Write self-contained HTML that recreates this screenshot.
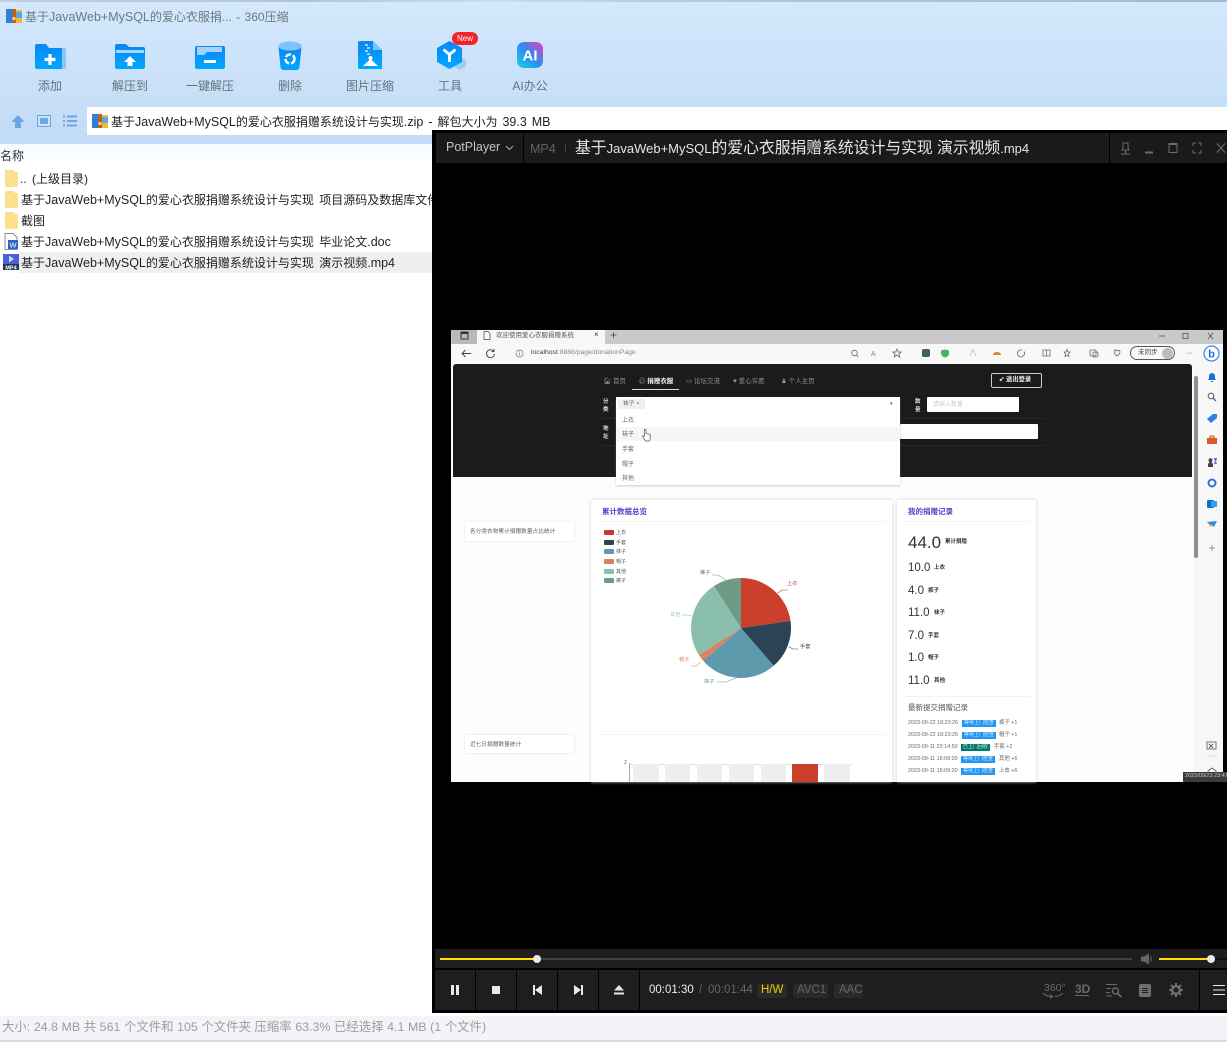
<!DOCTYPE html>
<html lang="zh"><head><meta charset="utf-8"><title>360压缩</title>
<style>
html,body{margin:0;padding:0;width:1227px;height:1042px;overflow:hidden;background:#fff}
body{position:relative;font-family:"Liberation Sans","Noto Sans CJK SC",sans-serif}
.a{position:absolute}
.t{position:absolute;white-space:nowrap;line-height:1}
svg{position:absolute;overflow:visible}
.l{font-size:12.5px}
.lb{font-size:12px;color:#67727d;top:80px;width:80px;text-align:center}
.f{font-size:12px;color:#222;left:21px;word-spacing:2px}
.v{font-size:6px;color:#666}
.nav{font-size:6.5px;color:#8f9296;top:379px}
.num{color:#333;left:908px}
.unit{font-size:5.5px;font-weight:bold;color:#333}
.dt{font-size:5.4px;color:#666;left:908px}
.bd{font-size:5px;color:#cfeaff;background:#2196f3;text-align:center;height:7px;line-height:7px}
.lg{left:604px;width:10px;height:5px;border-radius:1px}
.sep{position:absolute;top:970px;height:40px;width:1px;background:#000}
</style></head><body>

<!-- 360 zip top -->
<div class="a" style="left:0;top:0;width:1227px;height:144px;background:linear-gradient(#d3e8fc,#c6def8 75%,#c2dbf6)"></div>
<div class="a" style="left:0;top:0;width:1227px;height:2px;background:linear-gradient(90deg,#c0cfdd,#b4c4d4 25%,#c8dcf0 40%,#b8c8d8 55%,#a8b8c8)"></div>
<svg style="left:6px;top:9px" width="17" height="15"><rect y="1" width="16" height="13" fill="#f0b93a"/><rect width="8" height="14" fill="#2f7fd6"/><rect x="8" y="3" width="8" height="6" fill="#5aa7ea"/><rect x="6" width="4" height="14" fill="#b5651d"/><rect x="6.500" y="8" width="3" height="3" fill="#f4d68b"/></svg>
<div class="t" style="left:25px;top:11px;font-size:12px;color:#6d7780;word-spacing:1px">基于<span class="l">JavaWeb+MySQL</span>的爱心衣服捐... - 360压缩</div>

<svg style="left:35px;top:44px" width="31" height="26"><defs><linearGradient id="bl" x1="0" y1="0" x2="0" y2="1"><stop offset="0" stop-color="#0a86f5"/><stop offset="1" stop-color="#00a8ff"/></linearGradient></defs><path d="M26 4h3a2 2 0 0 1 2 2v17a2 2 0 0 1-2 2h-3z" fill="#8cc6f5"/><path d="M0 2a2 2 0 0 1 2-2h9l3 4h13v21H2a2 2 0 0 1-2-2z" fill="url(#bl)"/><path d="M15 10v11M9.500 15.500h11" stroke="#fff" stroke-width="3.200"/></svg>
<svg style="left:115px;top:44px" width="30" height="25"><path d="M0 2a2 2 0 0 1 2-2h9l3 3h14a2 2 0 0 1 2 2v18a2 2 0 0 1-2 2H2a2 2 0 0 1-2-2z" fill="url(#bl)"/><rect x="1" y="6" width="28" height="3" fill="#a6d6fb"/><path d="M15 12l6 6h-3.500v4h-5v-4H9z" fill="#fff"/></svg>
<svg style="left:195px;top:46px" width="30" height="23"><rect width="30" height="23" rx="2" fill="url(#bl)"/><path d="M2 2h25v5H12l-3 3H2z" fill="#b6dcfb" transform="translate(0,-1)" opacity=".9"/><rect x="9" y="14" width="12" height="3" fill="#fff"/></svg>
<svg style="left:278px;top:41px" width="24" height="29"><ellipse cx="12" cy="5" rx="11.500" ry="4.500" fill="#7cc2fb"/><path d="M.5 6c1 1.500 4 3.500 11.500 3.500S22.500 7.500 23.500 6l-2 20a3 3 0 0 1-3 3h-13a3 3 0 0 1-3-3z" fill="url(#bl)"/><circle cx="12" cy="18" r="4.500" fill="none" stroke="#fff" stroke-width="2.500" stroke-dasharray="6 2"/></svg>
<svg style="left:358px;top:41px" width="24" height="28"><path d="M2 0h13l9 9v18a1 1 0 0 1-1 1H2a2 2 0 0 1-2-2V2a2 2 0 0 1 2-2z" fill="url(#bl)"/><path d="M15 0l9 9h-9z" fill="#7cc2fb"/><rect x="7" y="3" width="3" height="2" fill="#9fd3fb"/><rect x="9" y="6" width="3" height="2" fill="#9fd3fb"/><rect x="7" y="9" width="3" height="2" fill="#9fd3fb"/><rect x="9" y="12" width="3" height="2" fill="#9fd3fb"/><path d="M5 25l7.500-7 7.500 7z" fill="#fff"/><circle cx="12.500" cy="17" r="2" fill="#fff"/></svg>
<svg style="left:437px;top:41px" width="30" height="29"><path d="M23 16l6 3.500v6l-6 3.500-6-3.500v-6z" fill="#9ccdf7"/><path d="M12.500 0l12.500 7v14l-12.500 7L0 21V7z" fill="url(#bl)"/><path d="M6.500 8.500l6 5 6-5M12.500 13.500v7.500" stroke="#fff" stroke-width="2.800" fill="none"/></svg>
<div class="a" style="left:452px;top:32px;width:26px;height:13px;border-radius:7px;background:#f5222d"></div>
<div class="t" style="left:457px;top:35px;font-size:8px;color:#fff">New</div>
<svg style="left:517px;top:42px" width="26" height="26"><defs><linearGradient id="ai" x1="0" y1="1" x2="1" y2="0"><stop offset="0" stop-color="#18d4e6"/><stop offset=".5" stop-color="#2b8cf0"/><stop offset="1" stop-color="#e83ec0"/></linearGradient></defs><rect width="26" height="26" rx="7" fill="url(#ai)"/><text x="13" y="18.500" font-size="15" font-weight="bold" fill="#fff" text-anchor="middle" font-family="Liberation Sans">AI</text></svg>

<div class="t lb" style="left:10px">添加</div>
<div class="t lb" style="left:90px">解压到</div>
<div class="t lb" style="left:170px">一键解压</div>
<div class="t lb" style="left:250px">删除</div>
<div class="t lb" style="left:330px">图片压缩</div>
<div class="t lb" style="left:410px">工具</div>
<div class="t lb" style="left:490px">AI办公</div>

<!-- address -->
<svg style="left:11px;top:115px" width="14" height="13"><path d="M7 0l6.500 7H10v6H4V7H.5z" fill="#6ca6e4"/></svg>
<svg style="left:37px;top:115px" width="14" height="12"><rect x=".5" y=".5" width="13" height="11" fill="#cfe3f8" stroke="#6ca6e4"/><rect x="3" y="3" width="8" height="6" fill="#6ca6e4"/></svg>
<svg style="left:63px;top:115px" width="14" height="12"><path d="M0 1.500h2M4 1.500h10M0 6h2M4 6h10M0 10.500h2M4 10.500h10" stroke="#6ca6e4" stroke-width="2"/></svg>
<div class="a" style="left:87px;top:107px;width:1140px;height:28px;background:#fff"></div>
<svg style="left:92px;top:114px" width="17" height="15"><rect y="1" width="16" height="13" fill="#f0b93a"/><rect width="8" height="14" fill="#2f7fd6"/><rect x="8" y="3" width="8" height="6" fill="#5aa7ea"/><rect x="6" width="4" height="14" fill="#b5651d"/><rect x="6.500" y="8" width="3" height="3" fill="#f4d68b"/></svg>
<div class="t" style="left:111px;top:116px;font-size:12px;color:#222;word-spacing:1.500px">基于<span class="l">JavaWeb+MySQL</span>的爱心衣服捐赠系统设计与实现<span class="l">.zip - </span>解包大小为<span class="l"> 39.3 MB</span></div>

<!-- list -->
<div class="a" style="left:0;top:144px;width:432px;height:22px;background:linear-gradient(#f4f9fe,#fff)"></div>
<div class="t" style="left:0;top:150px;font-size:12px;color:#333">名称</div>
<div class="a" style="left:19px;top:252px;width:413px;height:21px;background:#efefef"></div>
<svg style="left:5px;top:170px" width="14" height="18"><path d="M0 1a1 1 0 0 1 1-1h8l1 2h2a1 1 0 0 1 1 1v13a1 1 0 0 1-1 1H1a1 1 0 0 1-1-1z" fill="#fbe08f"/></svg>
<svg style="left:5px;top:191px" width="14" height="18"><path d="M0 1a1 1 0 0 1 1-1h8l1 2h2a1 1 0 0 1 1 1v13a1 1 0 0 1-1 1H1a1 1 0 0 1-1-1z" fill="#fbe08f"/></svg>
<svg style="left:5px;top:212px" width="14" height="18"><path d="M0 1a1 1 0 0 1 1-1h8l1 2h2a1 1 0 0 1 1 1v13a1 1 0 0 1-1 1H1a1 1 0 0 1-1-1z" fill="#fbe08f"/></svg>
<svg style="left:4px;top:233px" width="15" height="17"><path d="M1 .5h8l4 4v12H1z" fill="#fff" stroke="#8a8f96"/><rect x="4" y="7" width="10" height="9" fill="#2a63c8"/><text x="9" y="14.500" font-size="7.500" fill="#fff" text-anchor="middle" font-family="Liberation Sans">W</text></svg>
<svg style="left:3px;top:254px" width="16" height="16"><rect width="16" height="10" fill="#4a5fd8"/><path d="M6 1.500l5 3.500-5 3.500z" fill="#cdd6ff"/><rect y="10" width="16" height="6" fill="#27364f"/><text x="8" y="15.500" font-size="5.500" font-weight="bold" fill="#fff" text-anchor="middle" font-family="Liberation Sans">MP4</text></svg>
<div class="t f" style="left:20px;top:173px">.. (上级目录)</div>
<div class="t f" style="top:194px;width:411px;overflow:hidden">基于<span class="l">JavaWeb+MySQL</span>的爱心衣服捐赠系统设计与实现 项目源码及数据库文件</div>
<div class="t f" style="top:215px">截图</div>
<div class="t f" style="top:236px">基于<span class="l">JavaWeb+MySQL</span>的爱心衣服捐赠系统设计与实现 毕业论文<span class="l">.doc</span></div>
<div class="t f" style="top:257px">基于<span class="l">JavaWeb+MySQL</span>的爱心衣服捐赠系统设计与实现 演示视频<span class="l">.mp4</span></div>

<!-- status -->
<div class="a" style="left:0;top:1016px;width:1227px;height:24px;background:#f2f4f9"></div>
<div class="a" style="left:0;top:1040px;width:1227px;height:2px;background:#d3dfe3"></div>
<div class="t" style="left:2px;top:1021px;font-size:12.400px;color:#9c9c9c;word-spacing:.15px">大小: 24.8 MB 共 561 个文件和 105 个文件夹 压缩率 63.3% 已经选择 4.1 MB (1 个文件)</div>

<!-- PotPlayer -->
<div class="a" style="left:432px;top:130px;width:795px;height:883px;background:#000"></div>
<div class="a" style="left:436px;top:133px;width:791px;height:30px;background:#1a1a1a"></div>
<div class="a" style="left:523px;top:133px;width:1px;height:30px;background:#000"></div>
<div class="a" style="left:1109px;top:133px;width:1px;height:30px;background:#000"></div>
<div class="t" style="left:446px;top:141px;font-size:12.500px;color:#c4c4c4">PotPlayer</div>
<svg style="left:505px;top:145px" width="9" height="6"><path d="M1 1l3.500 3.500L8 1" fill="none" stroke="#aaa"/></svg>
<div class="t" style="left:530px;top:143px;font-size:12.500px;color:#626262">MP4</div>
<div class="a" style="left:565px;top:143px;width:1px;height:10px;background:#444"></div>
<div class="t" style="left:575px;top:141px;font-size:15.800px;color:#e6e6e6">基于<span style="font-size:13px">JavaWeb+MySQL</span>的爱心衣服捐赠系统设计与实现 演示视频<span style="font-size:13px">.mp4</span></div>
<svg style="left:1120px;top:142px" width="108" height="13" fill="none" stroke="#6c6c6c"><path d="M3 1h5v5l1 2H2l1-2zM5.500 8v4M1 12h9" stroke-width="1"/><path d="M25 10.500h8" stroke-width="2"/><path d="M49 1.500h8v9h-8zM49 2.500h8" stroke-width="1"/><path d="M73 1h3M73 1v3M81 1h-3M81 1v3M73 11h3M73 11V8M81 11h-3M81 11V8" stroke-width="1"/><path d="M97 1.500l8 9M105 1.500l-8 9" stroke-width="1.200"/></svg>

<!-- video frame -->
<div class="a" style="left:0;top:0;width:1227px;height:1042px;filter:blur(.35px)">
<div class="a" style="left:451px;top:330px;width:745px;height:452px;background:#fdfdfd"></div>
<div class="a" style="left:1196px;top:330px;width:27px;height:452px;background:#f7f7f7"></div>
<div class="a" style="left:451px;top:330px;width:772px;height:14px;background:#c9c9c9"></div>
<div class="a" style="left:451px;top:344px;width:772px;height:20px;background:#f8f8f8"></div>
<div class="a" style="left:452px;top:330px;width:25px;height:14px;background:#b9b9b9"></div>
<div class="a" style="left:477px;top:330px;width:128px;height:14px;background:#f7f7f7"></div>
<svg style="left:460px;top:331px" width="10" height="10"><rect x="1" y="1" width="7" height="7" fill="none" stroke="#333"/><rect x="1" y="1" width="7" height="2" fill="#333"/></svg>
<svg style="left:483px;top:331px" width="8" height="10"><path d="M1 .500h4l2 2v6H1z" fill="none" stroke="#444" stroke-width=".7"/></svg>
<div class="t v" style="left:496px;top:333px;color:#555;font-size:6.500px">欢迎使用爱心衣服捐赠系统</div>
<div class="t" style="left:594px;top:331px;font-size:8px;color:#333">×</div>
<div class="t" style="left:610px;top:329px;font-size:12px;color:#555">+</div>
<svg style="left:1158px;top:332px" width="60" height="8" fill="none" stroke="#555" stroke-width=".8"><path d="M1 4h6"/><rect x="25" y="1.500" width="5" height="5"/><path d="M50 1l5 6M55 1l-5 6"/></svg>
<svg style="left:461px;top:349px" width="36" height="10" fill="none" stroke="#444" stroke-width=".9"><path d="M1 4.500h9M4.500 1L1 4.500 4.500 8"/><path d="M32.500 2a4 4 0 1 0 1 3M33 0v2.500h-2.500"/></svg>
<svg style="left:515px;top:349px" width="9" height="9"><circle cx="4.500" cy="4.500" r="3.500" fill="none" stroke="#777" stroke-width=".7"/><path d="M4.500 3.800v2.700M4.500 2.300v.8" stroke="#777" stroke-width=".7"/></svg>
<div class="t" style="left:531px;top:350px;font-size:6.800px;color:#888"><span style="color:#444">localhost</span>:8888/page/donationPage</div>
<svg style="left:850px;top:348px" width="340" height="11" fill="none" stroke="#666" stroke-width=".8">
<circle cx="4.500" cy="5" r="2.800"/><path d="M6.500 7l2 2"/>
<text x="21" y="8" font-size="7" fill="#888" stroke="none" font-family="Liberation Sans">A</text>
<path d="M47 1l1.300 3h3l-2.500 2 1 3-2.800-1.800L44.200 9l1-3-2.500-2h3z"/>
<rect x="72" y="1" width="8" height="8" rx="2" fill="#44604e" stroke="none"/>
<path d="M95 1.500l4 1v3c0 2-2 3.500-4 4-2-.500-4-2-4-4v-3z" fill="#4bb35a" stroke="none"/>
<path d="M120 8l2.500-6h1L126 8" stroke="#bbb"/>
<path d="M143 7c0-2 2-3 4-3s4 1 4 3z" fill="#d98a2b" stroke="none"/>
<path d="M172 2a3.500 3.500 0 1 0 2 1.500"/>
<path d="M193 2h7v6h-7zM196.500 2v6"/>
<path d="M217 1.500l1 2.500h2l-1.500 2 .5 2.500-2-1.200-2 1.200.5-2.500-1.500-2h2z"/>
<rect x="240" y="2" width="6" height="6" rx="1"/><rect x="243" y="4" width="5" height="5" rx="1"/>
<path d="M264 3c1-2 3-1 3 0 1-1 3-1 3 1s-3 4-3 4-3-2-3-5z"/>
</svg>
<div class="a" style="left:1130px;top:346px;width:45px;height:14px;border:1px solid #555;border-radius:8px;box-sizing:border-box;background:#f8f8f8"></div>
<div class="t" style="left:1138px;top:350px;font-size:6.500px;color:#444">未同步</div>
<div class="a" style="left:1162px;top:348px;width:11px;height:11px;border-radius:50%;background:#bdbdbd"></div>
<div class="t" style="left:1186px;top:350px;font-size:7px;color:#333">···</div>
<svg style="left:1203px;top:345px" width="17" height="17"><circle cx="8.500" cy="8.500" r="7.500" fill="#fff" stroke="#3a87e0" stroke-width="1.200"/><text x="8.500" y="12.500" font-size="11" font-weight="bold" fill="#1f6fd0" text-anchor="middle" font-family="Liberation Sans">b</text></svg>

<div class="a" style="left:453px;top:364px;width:739px;height:113px;background:#1a1b1d;border-radius:3px 3px 0 0"></div>

<!-- nav -->
<div class="t nav" style="left:603px">🏠︎ 首页</div>
<div class="t nav" style="left:639px;color:#f0f0f0;font-weight:bold">♲ 捐赠衣服</div>
<div class="a" style="left:632px;top:389px;width:47px;height:1px;background:#ddd"></div>
<div class="t nav" style="left:686px">▭ 论坛交流</div>
<div class="t nav" style="left:733px">♥ 爱心许愿</div>
<div class="t nav" style="left:781px">♟ 个人主页</div>
<div class="a" style="left:991px;top:373px;width:51px;height:15px;border:1px solid #ccc;border-radius:2px;box-sizing:border-box"></div>
<div class="t" style="left:999px;top:377px;font-size:6.300px;color:#eee;font-weight:bold">➹ 退出登录</div>
<div class="t" style="left:603px;top:398px;width:6px;font-size:5.500px;line-height:8px;color:#ddd;font-weight:bold;white-space:normal">分类</div>
<div class="t" style="left:603px;top:425px;width:6px;font-size:5.500px;line-height:8px;color:#ddd;font-weight:bold;white-space:normal">地址</div>
<div class="t" style="left:915px;top:398px;width:6px;font-size:5.500px;line-height:8px;color:#ddd;font-weight:bold;white-space:normal">数量</div>
<div class="a" style="left:927px;top:397px;width:92px;height:15px;background:#fff;border-radius:1px"></div>
<div class="t" style="left:933px;top:402px;font-size:6px;color:#ccc">请输入数量</div>
<div class="a" style="left:900px;top:424px;width:138px;height:15px;background:#fff;border-radius:1px"></div>
<div class="a" style="left:601px;top:418px;width:445px;height:1px;background:#26272a"></div>
<div class="a" style="left:601px;top:445px;width:445px;height:1px;background:#26272a"></div>

<!-- dropdown -->
<div class="a" style="left:616px;top:397px;width:284px;height:88px;background:#fff;box-shadow:0 1px 2px rgba(120,150,150,.45)"></div>
<div class="a" style="left:616px;top:427px;width:284px;height:14px;background:#f5f6f7"></div>
<div class="a" style="left:618px;top:399px;width:27px;height:10px;background:#eef0f2;border-radius:1px"></div>
<div class="t" style="left:623px;top:402px;font-size:5.800px;color:#666">袜子 ×</div>
<div class="t" style="left:890px;top:402px;font-size:5px;color:#555">▾</div>
<div class="t v" style="left:622px;top:418px">上衣</div>
<div class="t v" style="left:622px;top:432px">袜子</div>
<div class="t v" style="left:622px;top:447px">手套</div>
<div class="t v" style="left:622px;top:462px">帽子</div>
<div class="t v" style="left:622px;top:476px">其他</div>
<svg style="left:642px;top:428px" width="9" height="14"><path d="M2.500 1.500v7L1 7.500.8 9l2.700 4h4l.7-2V6.500L4 5.500V1.500z" fill="#fff" stroke="#555" stroke-width=".7"/></svg>

<!-- scrollbar -->
<div class="a" style="left:1193px;top:364px;width:6px;height:418px;background:#f6f6f6"></div>
<div class="a" style="left:1194px;top:376px;width:4px;height:182px;background:#8e8e8e;border-radius:2px"></div>
<!-- side icons -->
<svg style="left:1203px;top:368px" width="18" height="410">
<path d="M5 12c1-1 1-2 1-4a3 3 0 0 1 6 0c0 2 0 3 1 4zM8 13h2v1H8z" fill="#1b6fd6"/>
<circle cx="8" cy="28" r="2.800" fill="none" stroke="#666" stroke-width="1.100"/><path d="M10 30l3 3" stroke="#7a3fd0" stroke-width="1.300"/>
<path d="M4 51l6-5h4v4l-6 5z" fill="#2f7fe0"/>
<rect x="4" y="70" width="10" height="6" fill="#d85a25"/><rect x="7" y="68" width="4" height="2" fill="none" stroke="#d85a25"/>
<path d="M5 99v-3l1.500-2a2 2 0 1 1 2 0L10 96v3z" fill="#444"/><path d="M11 90h3v1l-1 2 1 3h-3l1-3-1-2z" fill="#8d5ce0"/>
<circle cx="9" cy="115" r="3.500" fill="none" stroke="#2f72d6" stroke-width="2"/>
<rect x="4" y="132" width="7" height="8" rx="1" fill="#0a6ec0"/><rect x="8" y="133" width="6" height="6" fill="#35a0e8"/>
<path d="M4 154l10-1-3 6-2-2-1 2z" fill="#2f8ae0"/><path d="M4 154l5 3-1 2z" fill="#e6a43a"/>
<path d="M9 177v6M6 180h6" stroke="#777" stroke-width=".8"/>
<rect x="4" y="374" width="9" height="7" fill="none" stroke="#555" stroke-width=".8"/><path d="M6 376l4 4M10 376l-4 4" stroke="#333" stroke-width=".8"/>
<path d="M4 388h10" stroke="#ccc" stroke-width=".6"/>
<path d="M5 403l4-3 4 3v3H5z" fill="none" stroke="#555" stroke-width=".8"/>
</svg>

<!-- content -->
<div class="a" style="left:465px;top:522px;width:109px;height:19px;background:#fff;box-shadow:0 0 2px #ddd"></div>
<div class="t" style="left:470px;top:530px;font-size:5.700px;color:#666">各分类衣物累计捐赠数量占比统计</div>
<div class="a" style="left:465px;top:735px;width:109px;height:18px;background:#fff;box-shadow:0 0 2px #ddd"></div>
<div class="t" style="left:470px;top:743px;font-size:5.700px;color:#666">近七日捐赠数量统计</div>

<div class="a" style="left:591px;top:500px;width:301px;height:282px;background:#fff;box-shadow:0 0 3px #ccc"></div>
<div class="t" style="left:602px;top:508px;font-size:7.500px;color:#5a3cc4;font-weight:bold">累计数据总览</div>
<div class="a" style="left:596px;top:521px;width:291px;height:1px;background:#f4f4f4"></div>
<div class="a" style="left:596px;top:734px;width:291px;height:1px;background:#f4f4f4"></div>

<div class="a lg" style="top:530px;background:#c23a2c"></div><div class="t" style="left:616px;top:531px;font-size:5px;color:#555">上衣</div>
<div class="a lg" style="top:540px;background:#2f4554"></div><div class="t" style="left:616px;top:541px;font-size:5px;color:#555">手套</div>
<div class="a lg" style="top:549px;background:#5f9aab"></div><div class="t" style="left:616px;top:550px;font-size:5px;color:#555">袜子</div>
<div class="a lg" style="top:559px;background:#d4825f"></div><div class="t" style="left:616px;top:560px;font-size:5px;color:#555">帽子</div>
<div class="a lg" style="top:569px;background:#8dbfad"></div><div class="t" style="left:616px;top:570px;font-size:5px;color:#555">其他</div>
<div class="a lg" style="top:578px;background:#6f9a88"></div><div class="t" style="left:616px;top:579px;font-size:5px;color:#555">裤子</div>

<svg style="left:0;top:0" width="1227" height="1042">
<path d="M741 628L741 578A50 50 0 0 1 790.500 620.900Z" fill="#cb3f2c"/>
<path d="M741 628L790.500 620.900A50 50 0 0 1 773.700 665.800Z" fill="#2c4356"/>
<path d="M741 628L773.700 665.800A50 50 0 0 1 703.200 660.700Z" fill="#5d9aab"/>
<path d="M741 628L703.200 660.700A50 50 0 0 1 698.900 655Z" fill="#d9845f"/>
<path d="M741 628L698.900 655A50 50 0 0 1 714 586Z" fill="#8abfad"/>
<path d="M741 628L714 586A50 50 0 0 1 741 578Z" fill="#6f9a86"/>
<g fill="none" stroke-width=".6">
<path d="M778 593l4-3h6" stroke="#c23a2c"/><path d="M789 647l4 2h5" stroke="#2f4554"/>
<path d="M736 678l-10 4h-9" stroke="#5f9aab"/><path d="M700 662l-3 4h-6" stroke="#d4825f"/>
<path d="M692 616l-4-1h-6" stroke="#8abfad"/><path d="M726 580l-8-5h-6" stroke="#6f9a88"/>
</g>
</svg>
<div class="t" style="left:787px;top:582px;font-size:5.200px;color:#c23a60">上衣</div>
<div class="t" style="left:800px;top:645px;font-size:5.200px;color:#444">手套</div>
<div class="t" style="left:704px;top:680px;font-size:5.200px;color:#5f9aab">袜子</div>
<div class="t" style="left:679px;top:658px;font-size:5.200px;color:#d4825f">帽子</div>
<div class="t" style="left:670px;top:613px;font-size:5.200px;color:#a5cdbf">其他</div>
<div class="t" style="left:700px;top:571px;font-size:5.200px;color:#666">裤子</div>

<!-- bar chart -->
<div class="t" style="left:624px;top:761px;font-size:5px;color:#666">2</div>
<div class="a" style="left:629px;top:763px;width:1px;height:19px;background:#aaa"></div>
<div class="a" style="left:630px;top:764px;width:222px;height:1px;background:#ddd"></div>
<div class="a" style="left:633px;top:764px;width:26px;height:18px;background:#eee"></div>
<div class="a" style="left:665px;top:764px;width:25px;height:18px;background:#eee"></div>
<div class="a" style="left:697px;top:764px;width:25px;height:18px;background:#eee"></div>
<div class="a" style="left:729px;top:764px;width:25px;height:18px;background:#eee"></div>
<div class="a" style="left:761px;top:764px;width:25px;height:18px;background:#eee"></div>
<div class="a" style="left:792px;top:764px;width:26px;height:18px;background:#cb3f2c"></div>
<div class="a" style="left:824px;top:764px;width:26px;height:18px;background:#eee"></div>

<!-- right card -->
<div class="a" style="left:897px;top:500px;width:139px;height:282px;background:#fff;box-shadow:0 0 3px #ccc"></div>
<div class="t" style="left:908px;top:508px;font-size:7.500px;color:#5a3cc4;font-weight:bold">我的捐赠记录</div>
<div class="a" style="left:902px;top:521px;width:129px;height:1px;background:#f4f4f4"></div>
<div class="t num" style="top:534px;font-size:17px">44.0</div><div class="t unit" style="left:945px;top:540px">累计捐赠</div>
<div class="t num" style="top:563px;font-size:11.500px">10.0</div><div class="t unit" style="left:934px;top:566px">上衣</div>
<div class="t num" style="top:586px;font-size:11.500px">4.0</div><div class="t unit" style="left:928px;top:589px">裤子</div>
<div class="t num" style="top:608px;font-size:11.500px">11.0</div><div class="t unit" style="left:934px;top:611px">袜子</div>
<div class="t num" style="top:631px;font-size:11.500px">7.0</div><div class="t unit" style="left:928px;top:634px">手套</div>
<div class="t num" style="top:653px;font-size:11.500px">1.0</div><div class="t unit" style="left:928px;top:656px">帽子</div>
<div class="t num" style="top:676px;font-size:11.500px">11.0</div><div class="t unit" style="left:934px;top:679px">其他</div>
<div class="a" style="left:904px;top:696px;width:126px;height:1px;background:#f2f2f2"></div>
<div class="t" style="left:908px;top:704px;font-size:7.500px;color:#555">最新提交捐赠记录</div>
<div class="t dt" style="top:721px">2023-09-22 18:23:26</div><div class="a bd" style="left:962px;top:720px;width:34px">等待上门检查</div><div class="t dt" style="left:999px;top:721px">裤子 +1</div>
<div class="t dt" style="top:733px">2023-09-22 18:23:26</div><div class="a bd" style="left:962px;top:732px;width:34px">等待上门检查</div><div class="t dt" style="left:999px;top:733px">帽子 +1</div>
<div class="t dt" style="top:745px">2023-09-11 22:14:50</div><div class="a bd" style="left:961px;top:744px;width:29px;background:#00796b">已上门回收</div><div class="t dt" style="left:994px;top:745px">手套 +2</div>
<div class="t dt" style="top:757px">2023-09-11 15:09:20</div><div class="a bd" style="left:961px;top:756px;width:34px">等待上门检查</div><div class="t dt" style="left:999px;top:757px">其他 +6</div>
<div class="t dt" style="top:769px">2023-09-11 15:09:20</div><div class="a bd" style="left:961px;top:768px;width:34px">等待上门检查</div><div class="t dt" style="left:999px;top:769px">上衣 +6</div>

<div class="a" style="left:1183px;top:772px;width:44px;height:10px;background:#3c3c3c"></div>
<div class="t" style="left:1185px;top:774px;font-size:5.500px;color:#ccc">2023/09/23 23:47</div>
</div>

<!-- controls -->
<div class="a" style="left:435px;top:949px;width:792px;height:19px;background:#1e1e1e"></div>
<div class="a" style="left:435px;top:970px;width:792px;height:40px;background:#1e1e1e"></div>
<div class="sep" style="left:475px"></div><div class="sep" style="left:516px"></div><div class="sep" style="left:557px"></div><div class="sep" style="left:598px"></div><div class="sep" style="left:639px"></div><div class="sep" style="left:1199px"></div>
<div class="a" style="left:440px;top:958px;width:97px;height:2px;background:#ffe000"></div>
<div class="a" style="left:537px;top:958px;width:595px;height:2px;background:#404040"></div>
<div class="a" style="left:533px;top:955px;width:8px;height:8px;border-radius:50%;background:#e8e8e8"></div>
<svg style="left:1141px;top:953px" width="13" height="12"><path d="M0 3.500h3L8 .5v11L3 8.500H0z" fill="#666"/><path d="M10 3v6" stroke="#666"/></svg>
<div class="a" style="left:1159px;top:958px;width:52px;height:2px;background:#ffe000"></div>
<div class="a" style="left:1207px;top:955px;width:8px;height:8px;border-radius:50%;background:#e8e8e8"></div>
<div class="a" style="left:1215px;top:958px;width:12px;height:2px;background:#111"></div>

<svg style="left:451px;top:985px" width="8" height="10"><rect width="3" height="10" fill="#e8e8e8"/><rect x="5" width="3" height="10" fill="#e8e8e8"/></svg>
<svg style="left:492px;top:986px" width="8" height="8"><rect width="8" height="8" fill="#e8e8e8"/></svg>
<svg style="left:533px;top:985px" width="9" height="10"><rect width="2" height="10" fill="#e8e8e8"/><path d="M9 0v10L2 5z" fill="#e8e8e8"/></svg>
<svg style="left:574px;top:985px" width="9" height="10"><rect x="7" width="2" height="10" fill="#e8e8e8"/><path d="M0 0v10l7-5z" fill="#e8e8e8"/></svg>
<svg style="left:614px;top:985px" width="10" height="10"><path d="M5 0l5 5.500H0z" fill="#e8e8e8"/><rect y="7.500" width="10" height="2" fill="#e8e8e8"/></svg>

<div class="t" style="left:649px;top:985px;font-size:11.500px;color:#e6eef2">00:01:30</div>
<div class="t" style="left:699px;top:985px;font-size:11.500px;color:#666">/</div>
<div class="t" style="left:708px;top:985px;font-size:11.500px;color:#666">00:01:44</div>
<div class="a" style="left:757px;top:984px;width:30px;height:14px;background:#2a2a2a;border-radius:2px"></div>
<div class="t" style="left:761px;top:985px;font-size:11.500px;color:#e6d000">H/W</div>
<div class="a" style="left:793px;top:984px;width:35px;height:14px;background:#2a2a2a;border-radius:2px"></div>
<div class="t" style="left:797px;top:985px;font-size:11.500px;color:#666">AVC1</div>
<div class="a" style="left:834px;top:984px;width:29px;height:14px;background:#2a2a2a;border-radius:2px"></div>
<div class="t" style="left:839px;top:985px;font-size:11.500px;color:#666">AAC</div>

<div class="t" style="left:1044px;top:983px;font-size:10.500px;color:#6a6a6a">360°</div>
<svg style="left:1042px;top:992px" width="22" height="7"><path d="M1 1c3 3 7 3.500 9 3.500M21 1c-2 2-5 3-8 3.500M8 2.500l2.500 2L8 6.500" fill="none" stroke="#6a6a6a"/></svg>
<div class="t" style="left:1075px;top:983px;font-size:12px;font-weight:bold;color:#6a6a6a">3D</div>
<div class="a" style="left:1075px;top:995px;width:14px;height:1px;background:#6a6a6a"></div>
<svg style="left:1105px;top:983px" width="18" height="15" fill="none" stroke="#6a6a6a"><path d="M1 1.500h11M1 5.500h5M1 9.500h4M1 13h6"/><circle cx="10.500" cy="8" r="3" stroke-width="1.500"/><path d="M12.500 10.500l4 3.500" stroke-width="1.800"/></svg>
<svg style="left:1139px;top:984px" width="12" height="13"><rect width="12" height="13" rx="2" fill="#6f6f6f"/><path d="M3 4.500h6M3 6.500h6M3 8.500h6" stroke="#1e1e1e"/></svg>
<svg style="left:1169px;top:983px" width="14" height="14"><circle cx="7" cy="7" r="3.800" fill="none" stroke="#6f6f6f" stroke-width="2.400"/><path d="M7 0v3M7 11v3M0 7h3M11 7h3M2 2l2 2M10 10l2 2M12 2l-2 2M4 10l-2 2" stroke="#6f6f6f" stroke-width="2"/></svg>
<svg style="left:1213px;top:985px" width="12" height="10"><path d="M0 .5h12M0 5h12M0 9.500h12" stroke="#e8e8e8"/></svg>
</body></html>
